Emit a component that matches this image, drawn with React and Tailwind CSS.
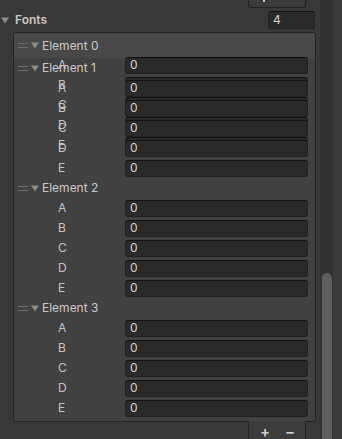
const Tri = ({ className = '' }) => (
    <svg className={className} width="8" height="7" viewBox="0 0 8 7">
        <path d="M0 0.5 L8 0.5 L4 6.5 Z" fill="currentColor" />
    </svg>
)

const Handle = () => (
    <div className="flex w-[10px] flex-col gap-[3px]">
        <div className="h-px bg-[#6c6c6c]" />
        <div className="h-px bg-[#6c6c6c]" />
    </div>
)

function Header({ label, className = '' }) {
    return (
        <div className={`flex items-center pl-[4px] ${className}`}>
            <Handle />
            <Tri className="ml-[3px] text-[#8a8a8a]" />
            <span className="ml-[3px] text-[#c8c8c8]">{label}</span>
        </div>
    )
}

function Field({ label, relative = true }) {
    return (
        <div className={`${relative ? 'relative' : ''} flex h-[20px] items-center`}>
            <div className="w-[111px] pl-[44px] text-[#c4c4c4]">{label}</div>
            <div className="flex h-[17px] w-[183px] items-center rounded-[3px] border border-[#212121] border-t-[#111] bg-[#2a2a2a] pl-[4px] text-[#d2d2d2]">
                0
            </div>
        </div>
    )
}

const keys = ['A', 'B', 'C', 'D', 'E']

export default function App() {
    return (
        <div className="flex h-[439px] w-[342px] overflow-hidden bg-[#383838] font-['Inter',sans-serif] text-[12px] leading-none">
            <div className="w-[320px]">
                {/* button cut off at top */}
                <div className="ml-[248px] flex h-[8px] w-[58px] justify-start rounded-b-[3px] border border-t-0 border-[#222] bg-[#3b3b3b] pl-[14px]">
                    <div className="h-[2px] w-[2px] bg-[#bbb]" />
                </div>

                {/* Fonts row */}
                <div className="mt-[3px] flex h-[18px] items-center">
                    <Tri className="ml-[1px] text-[#8c8c8c]" />
                    <span className="ml-[6px] font-semibold text-[#c8c8c8]">Fonts</span>
                    <div className="ml-auto mr-[5px] flex h-[18px] w-[47px] items-center rounded-[3px] border border-[#212121] border-t-[#111] bg-[#2a2a2a] pl-[4px] text-[#d2d2d2]">
                        4
                    </div>
                </div>

                {/* list */}
                <div className="ml-[13px] mt-[3px] w-[303px] rounded-[3px] border border-[#242424] bg-[#414141] pb-[3px]">
                    <Header label="Element 0" className="h-[25px] rounded-t-[2px] bg-[#484848]" />

                    <div className="relative">
                        {/* labels and fields drawn twice, offset, as in the glitchy reference */}
                        <div className="absolute left-0 right-0 top-[-3px]">
                            {keys.map((k) => (
                                <Field key={k} label={k} relative={false} />
                            ))}
                        </div>
                        <Header label="Element 1" className="relative h-[20px]" />
                        {keys.map((k) => (
                            <Field key={k} label={k} />
                        ))}
                    </div>

                    <Header label="Element 2" className="h-[20px]" />
                    {keys.map((k) => (
                        <Field key={k} label={k} />
                    ))}

                    <Header label="Element 3" className="h-[20px]" />
                    {keys.map((k) => (
                        <Field key={k} label={k} />
                    ))}
                </div>

                {/* footer */}
                <div className="ml-[248px] mt-[-1px] flex h-[19px] w-[58px] items-center border-x border-[#242424] bg-[#3c3c3c] pt-[1px] text-[15px] font-semibold leading-none text-[#d0d0d0]">
                    <span className="ml-[11px]">+</span>
                    <span className="ml-[15px]">−</span>
                </div>
            </div>

            {/* scrollbar */}
            <div className="w-[13px] bg-[#323232] pt-[273px]">
                <div className="ml-[2px] h-[200px] w-[10px] rounded-t-full bg-[#5e5e5e]" />
            </div>
            <div className="w-[9px] bg-[#3b3b3b]" />
        </div>
    )
}
